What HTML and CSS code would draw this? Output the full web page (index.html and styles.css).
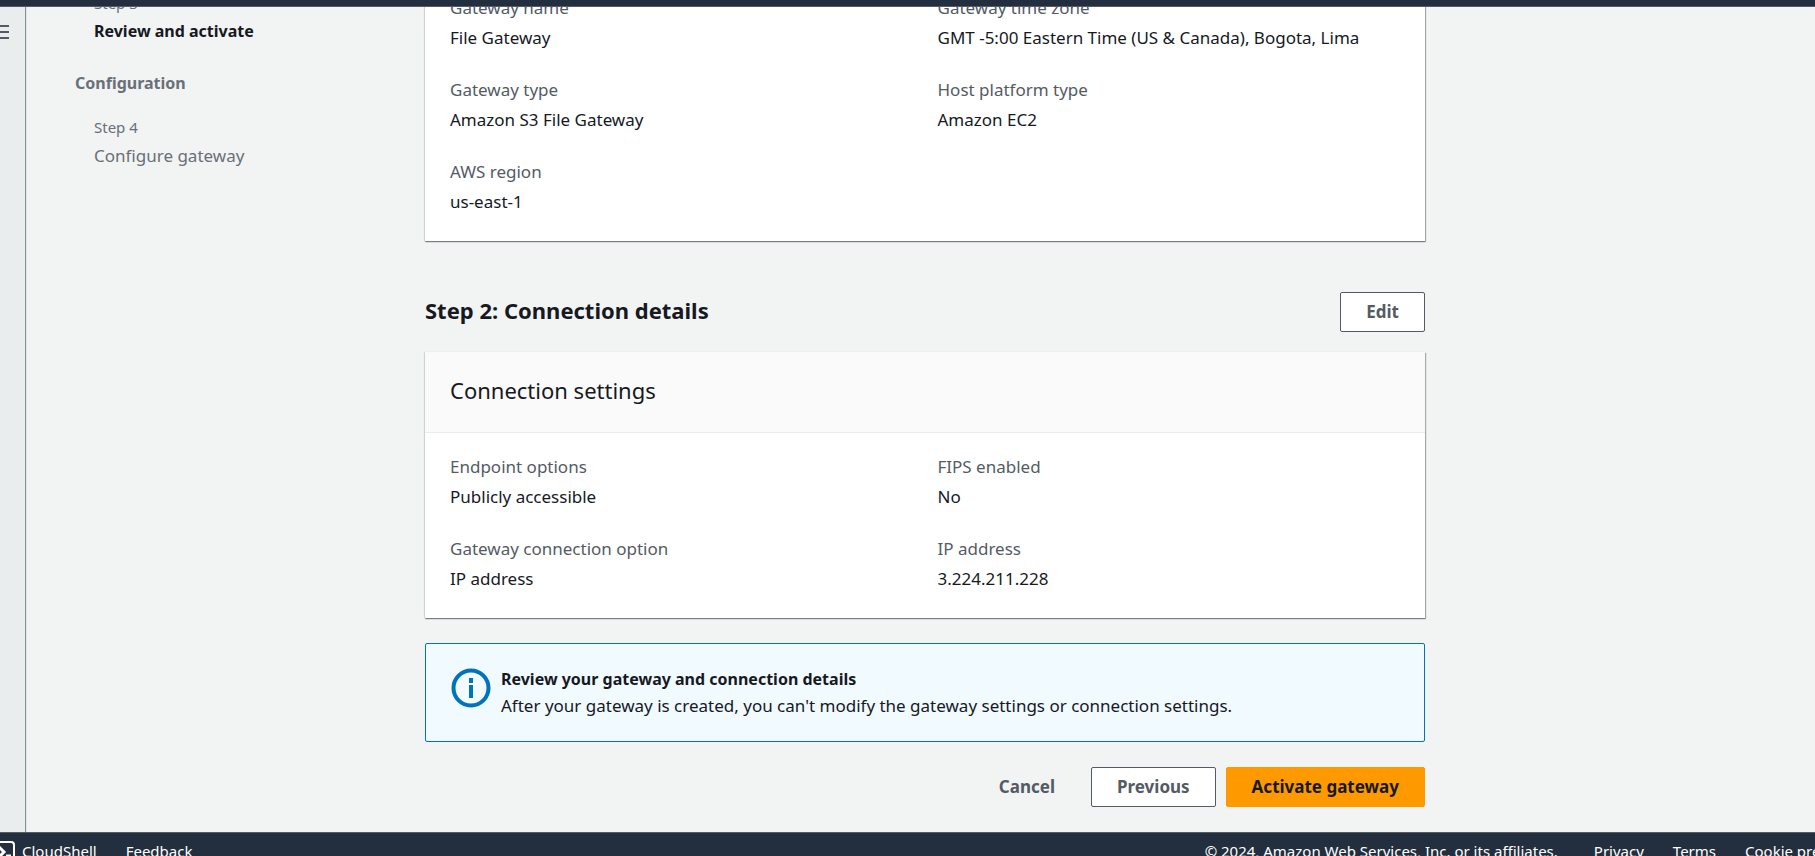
FILE: index.html
```html
<!DOCTYPE html>
<html lang="en">
<head>
<meta charset="utf-8">
<title>Review and activate</title>
<link rel="stylesheet" href="styles.css">
</head>
<body>
<header class="topbar"></header>
<div class="shell">
  <aside class="rail">
    <button class="menu" aria-label="Open navigation">
      <svg width="20" height="20" viewBox="0 0 20 20" fill="none" stroke="#545b64" stroke-width="2"><path d="M0 4h20M0 10h20M0 16h20"/></svg>
    </button>
  </aside>
  <div class="page">
    <nav class="steps" aria-label="Steps">
      <div class="step">
        <span class="step-num">Step 3</span>
        <span class="step-name current">Review and activate</span>
      </div>
      <h3 class="group">Configuration</h3>
      <div class="step">
        <span class="step-num">Step 4</span>
        <span class="step-name">Configure gateway</span>
      </div>
    </nav>
    <main class="content">
      <section class="card">
        <dl class="pairs">
          <div><dt>Gateway name</dt><dd>File Gateway</dd></div>
          <div><dt>Gateway time zone</dt><dd>GMT -5:00 Eastern Time (US &amp; Canada), Bogota, Lima</dd></div>
          <div><dt>Gateway type</dt><dd>Amazon S3 File Gateway</dd></div>
          <div><dt>Host platform type</dt><dd>Amazon EC2</dd></div>
          <div><dt>AWS region</dt><dd>us-east-1</dd></div>
        </dl>
      </section>
      <div class="section-head">
        <h2>Step 2: Connection details</h2>
        <button class="btn">Edit</button>
      </div>
      <section class="card">
        <h3 class="card-title">Connection settings</h3>
        <dl class="pairs">
          <div><dt>Endpoint options</dt><dd>Publicly accessible</dd></div>
          <div><dt>FIPS enabled</dt><dd>No</dd></div>
          <div><dt>Gateway connection option</dt><dd>IP address</dd></div>
          <div><dt>IP address</dt><dd>3.224.211.228</dd></div>
        </dl>
      </section>
      <div class="notice">
        <svg class="notice-icon" width="40" height="40" viewBox="0 0 40 40" fill="none" stroke="#0073bb" stroke-width="4"><circle cx="20" cy="20" r="17.5"/><path d="M20 10v5M20 17v13"/></svg>
        <div>
          <strong>Review your gateway and connection details</strong>
          <p>After your gateway is created, you can't modify the gateway settings or connection settings.</p>
        </div>
      </div>
      <div class="actions">
        <button class="btn link">Cancel</button>
        <button class="btn">Previous</button>
        <button class="btn primary">Activate gateway</button>
      </div>
    </main>
  </div>
</div>
<footer class="footer">
  <button class="shell-btn">
    <svg width="22" height="22" viewBox="0 0 22 22" fill="none" stroke="#fff" stroke-width="2"><rect x="1" y="1" width="20" height="20" rx="3"/><path d="M6 6l5 5-5 5" stroke-width="3"/><path d="M13 15h5" stroke-width="3"/></svg>
    CloudShell
  </button>
  <a href="#feedback">Feedback</a>
  <span class="copyright">© 2024, Amazon Web Services, Inc. or its affiliates.</span>
  <a href="#privacy">Privacy</a>
  <a href="#terms">Terms</a>
  <a href="#cookies" class="cookies">Cookie preferences</a>
</footer>
</body>
</html>
```
FILE: styles.css
```css
* { box-sizing: border-box; }
body {
  margin: 0;
  height: 100vh;
  overflow: hidden;
  display: flex;
  flex-direction: column;
  background: #f2f3f3;
  color: #16191f;
  font: 17px/27px "Noto Sans", sans-serif;
}
h2, h3, p, dl, dd { margin: 0; }
button { font: inherit; color: inherit; cursor: pointer; }

.topbar { flex: none; height: 7px; background: #232f3e; border-bottom: 1px solid #545b64; }
.shell { flex: 1; min-height: 0; display: flex; overflow: hidden; }

.rail {
  flex: none;
  width: 25px;
  padding-top: 15px;
  background: #eaeded;
  box-shadow: 1px 0 1px 0 #879596;
}
.menu { display: block; margin-left: -11px; padding: 0; border: 0; background: none; line-height: 0; }

/* The page is scrolled, so its first lines run under the top bar. */
.page { flex: 1; min-width: 0; display: flex; margin-top: -16px; padding: 0 25px 0 50px; }
.steps { flex: none; width: 350px; color: #687078; }
.step { display: flex; flex-direction: column; gap: 2px; padding-left: 19px; }
.step-num { font-size: 15px; line-height: 25px; }
.current { font-size: 16px; font-weight: 700; color: #16191f; }
.group { margin: 25px 0 18px; font-size: 16px; font-weight: 700; line-height: 27px; }

.content { flex: 0 1 1000px; min-width: 0; }
.card { background: #fff; box-shadow: 0 1px 1px 0 rgba(0, 28, 36, .3), 1px 1px 1px 0 rgba(0, 28, 36, .3), -1px 0 1px 0 rgba(0, 28, 36, .1); }
.card-title {
  padding: 22px 25px 26px;
  background: #fafafa;
  border-bottom: 1px solid #eaeded;
  font-size: 22px;
  font-weight: 400;
  line-height: 32px;
}
.pairs { display: grid; grid-template-columns: 1fr 1fr; gap: 25px; padding: 20px 25px 26px; }
.card:first-child .pairs { padding-top: 3px; }
dt { margin-bottom: 3px; color: #545b64; }

.section-head { display: flex; align-items: center; justify-content: space-between; margin: 51px 0 20px; }
.section-head h2 { padding-bottom: 4px; font-size: 22px; line-height: 30px; }

.btn {
  height: 40px;
  padding: 0 25px 2px;
  border: 1px solid #545b64;
  border-radius: 2px;
  background: #fff;
  color: #545b64;
  font-weight: 700;
}
.btn.link { border-color: transparent; background: none; }
.btn.primary { border-color: #ff9900; background: #ff9900; color: #16191f; }

.notice {
  display: flex;
  gap: 10px;
  margin-top: 25px;
  padding: 22px 25px;
  border: 1px solid #0073bb;
  border-radius: 2px;
  background: #f1faff;
}
.notice-icon { flex: none; margin-top: 2px; }
.notice strong { display: block; font-size: 16px; line-height: 26px; }
.actions { display: flex; justify-content: flex-end; gap: 10px; margin-top: 25px; }

.footer {
  flex: none;
  display: flex;
  height: 24px;
  padding-top: 6px;
  border-top: 1px solid #545b64;
  background: #232f3e;
  color: #fff;
  font-size: 15px;
  line-height: 24px;
  white-space: nowrap;
  overflow: hidden;
}
.footer a { color: #fff; text-decoration: none; margin-right: 29px; }
.shell-btn { display: flex; gap: 7px; margin: 0 29px 0 -7px; padding: 0; border: 0; background: none; }
.shell-btn svg { flex: none; margin-top: 2px; }
.copyright { margin: 0 36px 0 auto; }
.footer .cookies { width: 70px; margin-right: 0; overflow: visible; }
```
